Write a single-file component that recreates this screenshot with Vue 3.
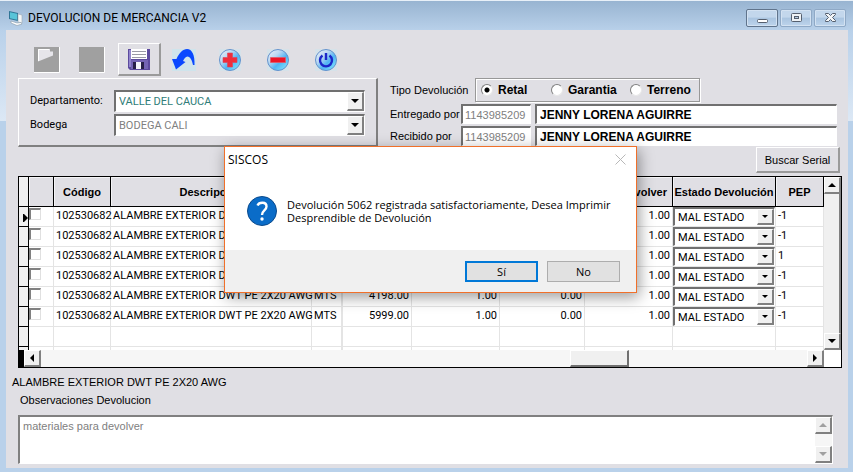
<script setup>
import { ref } from 'vue'

const departamentos = ['VALLE DEL CAUCA']
const bodegas = ['BODEGA CALI']
const tipos = ['Retal', 'Garantia', 'Terreno']
const tipo = ref('Retal')
const personas = [
  { id: 'entregado', label: 'Entregado por', cedula: '1143985209', nombre: 'JENNY LORENA AGUIRRE' },
  { id: 'recibido', label: 'Recibido por', cedula: '1143985209', nombre: 'JENNY LORENA AGUIRRE' }
]
const rows = ref(
  [
    ['1.00', '-1'],
    ['1.00', '-1'],
    ['1.00', '1'],
    ['1.00', '-1'],
    ['4198.00', '-1'],
    ['5999.00', '-1']
  ].map(([serial, pep]) => ({
    sel: false,
    codigo: '102530682',
    desc: 'ALAMBRE EXTERIOR DWT PE 2X20 AWG',
    um: 'MTS',
    serial,
    cantidad: '1.00',
    usado: '0.00',
    devolver: '1.00',
    estado: 'MAL ESTADO',
    pep
  }))
)
const observaciones = ref('materiales para devolver')
const dialogOpen = ref(true)
</script>

<template>
  <div class="window">
    <header class="titlebar">
      <svg class="app-icon" width="16" height="16" viewBox="0 0 16 16" aria-hidden="true">
        <path d="M1 1l9 2v8l-9-2z" fill="#2f7596" />
        <path d="M2 2.300l7 1.500v6L2 8.200z" fill="#58c4d8" />
        <path d="M10 4l4 1v8l-4-1z" fill="#f4f7f8" stroke="#9aa8b3" stroke-width=".6" />
        <path d="M3 11l6 2 4-.5 1 1.500-5 1.500-6-2.500z" fill="#fff" stroke="#8698a6" stroke-width=".6" />
      </svg>
      <h1>DEVOLUCION DE MERCANCIA V2</h1>
      <div class="caption-buttons">
        <button class="first" type="button" aria-label="Minimizar">
          <svg width="13" height="12" viewBox="0 0 13 12"><rect x="1.500" y="7.500" width="10" height="3" rx="1" fill="#fff" stroke="#555f6e" /></svg>
        </button>
        <button type="button" aria-label="Maximizar">
          <svg width="13" height="12" viewBox="0 0 13 12"><rect x="1.500" y="1.500" width="10" height="8" rx="1" fill="#eef2f6" stroke="#555f6e" /><rect x="4.500" y="4.500" width="4" height="2" fill="#b5cbe2" stroke="#555f6e" /></svg>
        </button>
        <button type="button" aria-label="Cerrar">
          <svg width="13" height="12" viewBox="0 0 13 12"><path d="M1.500 1.500h3l2 2 2-2h3v1L8.500 5.500l3 3v1h-3l-2-2-2 2h-3v-1l3-3-3-3z" fill="#f4f6f8" stroke="#555f6e" /></svg>
        </button>
      </div>
    </header>

    <main class="client">
      <div class="toolbar">
        <button type="button" aria-label="Abrir" disabled>
          <svg width="26" height="26" viewBox="0 0 26 26"><path d="M0 0h25v25H0z" fill="#a0a0a0" /><path d="M0 25.500h25.500V0" fill="none" stroke="#fff" /><path d="M4 2h12v2.500h3v4L4 14.500z" fill="#e6e5ea" /><path d="M4.500 14V2.500H15" fill="none" stroke="#fff" /></svg>
        </button>
        <button type="button" aria-label="Nuevo" disabled>
          <svg width="26" height="26" viewBox="0 0 26 26"><path d="M0 0h25v25H0z" fill="#a0a0a0" /><path d="M0 25.500h25.500V0" fill="none" stroke="#fff" /></svg>
        </button>
        <button type="button" class="raised" aria-label="Guardar">
          <svg width="24" height="24" viewBox="0 0 24 24">
            <path d="M1 2h22v21H3l-2-2z" fill="#5c4a9e" /><path d="M2 3h2v17H2z" fill="#9185cc" /><path d="M4 13h17v9H4z" fill="#7464b4" />
            <path d="M4 2h16v10H4z" fill="#fff" /><path d="M5 4.500h14M5 7.500h14M5 10.500h14" stroke="#9a9aa6" />
            <path d="M6 15h3v7H6z" fill="#272048" /><path d="M9 15h8v7H9z" fill="#f4f4fa" /><path d="M14 15h3v7h-3z" fill="#272048" />
          </svg>
        </button>
        <button type="button" aria-label="Deshacer">
          <svg width="24" height="24" viewBox="0 0 24 24"><path fill="#c8e6f0" d="M0 1h24v22H0z" opacity=".7" /><path d="M0 11h4.500C7 5 11 1 15 1c5 0 8 6 7.500 16h-1.500C20 12 18 8.500 15.500 8.500 13.500 8.500 12 11 11 13l2.500 1L4 21.500z" fill="#0a48ff" /></svg>
        </button>
        <button v-for="kind in ['Agregar', 'Quitar', 'Salir']" :key="kind" type="button" :aria-label="kind">
          <svg width="24" height="24" viewBox="0 0 24 24">
            <defs>
              <linearGradient :id="'orb' + kind" x1="0" y1="0" x2="1" y2="1">
                <stop offset="0" stop-color="#f2f2fa" /><stop offset=".35" stop-color="#b9d8f2" /><stop offset=".6" stop-color="#50b4f4" /><stop offset="1" stop-color="#8cf0ff" />
              </linearGradient>
            </defs>
            <path d="M1 1h22v22H1z" fill="#c8e6f0" opacity=".4" />
            <circle cx="12" cy="12" r="10.500" :fill="`url(#orb${kind})`" stroke="#6592cc" />
            <path v-if="kind === 'Agregar'" d="M9.500 5h5v4.500H19v5h-4.500V19h-5v-4.500H5v-5h4.500z" fill="#f12d3c" stroke="#d9485a" stroke-width=".6" />
            <path v-else-if="kind === 'Quitar'" d="M4.500 9.500h15v5h-15z" fill="#ee1527" stroke="#e05a68" stroke-width=".8" />
            <path v-else d="M8.500 7.500a6 6 0 1 0 7 0M12 5v7" fill="none" stroke="#1c28c8" stroke-width="2.400" />
          </svg>
        </button>
      </div>

      <div class="top">
        <section class="location">
          <label for="depto">Departamento:</label>
          <span class="combo teal">
            <select id="depto"><option v-for="d in departamentos" :key="d">{{ d }}</option></select>
            <i class="drop"><svg width="8" height="4" viewBox="0 0 8 4"><path d="M0 0h8L4 4z" /></svg></i>
          </span>
          <label for="bodega">Bodega</label>
          <span class="combo">
            <select id="bodega"><option v-for="b in bodegas" :key="b">{{ b }}</option></select>
            <i class="drop"><svg width="8" height="4" viewBox="0 0 8 4"><path d="M0 0h8L4 4z" /></svg></i>
          </span>
        </section>

        <section class="people">
          <div class="kind">
            <span>Tipo Devolución</span>
            <div class="radios" role="radiogroup" aria-label="Tipo Devolución">
              <label v-for="t in tipos" :key="t"><input v-model="tipo" type="radio" name="tipo" :value="t" />{{ t }}</label>
            </div>
          </div>
          <div v-for="p in personas" :key="p.id" class="person">
            <label :for="p.id">{{ p.label }}</label>
            <input :id="p.id" class="code" :value="p.cedula" readonly />
            <input class="name" :value="p.nombre" :aria-label="p.label + ' nombre'" readonly />
          </div>
        </section>
      </div>

      <div class="search"><button type="button" class="raised">Buscar Serial</button></div>

      <div class="grid">
        <div class="grid-body">
          <div class="table-clip">
            <table>
              <colgroup>
                <col class="w-mark" /><col class="w-check" /><col class="w-code" /><col /><col class="w-um" />
                <col class="w-serial" /><col class="w-num" /><col class="w-used" /><col class="w-num" /><col class="w-state" /><col class="w-pep" />
              </colgroup>
              <thead>
                <tr>
                  <th class="mark"></th><th></th><th>Código</th><th>Descripción</th><th>UM</th><th>Serial</th>
                  <th>Cantidad</th><th>Usado</th><th>Cant. Devolver</th><th>Estado Devolución</th><th>PEP</th>
                </tr>
              </thead>
              <tbody>
                <tr v-for="(r, i) in rows" :key="i">
                  <td class="mark"><svg v-if="i === 0" width="5" height="8" viewBox="0 0 5 8"><path d="M0 0h1l4 4-4 4H0z" /></svg></td>
                  <td class="check"><input v-model="r.sel" type="checkbox" :aria-label="'Fila ' + (i + 1)" /></td>
                  <td>{{ r.codigo }}</td>
                  <td>{{ r.desc }}</td>
                  <td class="um">{{ r.um }}</td>
                  <td class="num">{{ r.serial }}</td>
                  <td class="num">{{ r.cantidad }}</td>
                  <td class="num">{{ r.usado }}</td>
                  <td class="num">{{ r.devolver }}</td>
                  <td class="state">
                    <span class="combo small">
                      <select v-model="r.estado" :aria-label="'Estado ' + (i + 1)"><option>MAL ESTADO</option></select>
                      <i class="drop"><svg width="6" height="3" viewBox="0 0 6 3"><path d="M0 0h6L3 3z" /></svg></i>
                    </span>
                  </td>
                  <td>{{ r.pep }}</td>
                </tr>
                <tr v-for="n in 2" :key="'empty' + n">
                  <td class="mark"></td><td></td><td></td><td></td><td class="um"></td><td></td><td></td><td></td><td></td><td></td><td></td>
                </tr>
              </tbody>
            </table>
          </div>
          <div class="vscroll">
            <i class="arrow"><svg width="8" height="4" viewBox="0 0 8 4"><path d="M4 0l4 4H0z" /></svg></i>
            <i class="thumb"></i>
            <i class="arrow"><svg width="8" height="4" viewBox="0 0 8 4"><path d="M0 0h8L4 4z" /></svg></i>
          </div>
        </div>
        <div class="hscroll">
          <i class="arrow"><svg width="4" height="8" viewBox="0 0 4 8"><path d="M4 0v8L0 4z" /></svg></i>
          <div class="track"><i class="thumb"></i></div>
          <i class="arrow"><svg width="4" height="8" viewBox="0 0 4 8"><path d="M0 0l4 4-4 4z" /></svg></i>
          <i class="corner"></i>
        </div>
      </div>

      <p class="current">ALAMBRE EXTERIOR DWT PE 2X20 AWG</p>
      <label class="notes-label" for="obs">Observaciones Devolucion</label>
      <div class="notes">
        <textarea id="obs" v-model="observaciones"></textarea>
        <div class="vscroll off">
          <i class="arrow"><svg width="8" height="4" viewBox="0 0 8 4"><path d="M4 0l4 4H0z" /></svg></i>
          <i class="arrow"><svg width="8" height="4" viewBox="0 0 8 4"><path d="M0 0h8L4 4z" /></svg></i>
        </div>
      </div>
    </main>

    <div v-if="dialogOpen" class="dialog" role="dialog" aria-labelledby="dlg-title">
      <div class="dialog-head">
        <h2 id="dlg-title">SISCOS</h2>
        <button type="button" class="close" aria-label="Cerrar diálogo" @click="dialogOpen = false">
          <svg width="11" height="11" viewBox="0 0 11 11"><path d="M.5.500l10 10M10.500.500l-10 10" stroke="#b8b8b8" fill="none" /></svg>
        </button>
      </div>
      <div class="dialog-body">
        <svg width="30" height="30" viewBox="0 0 30 30" aria-hidden="true">
          <circle cx="15" cy="15" r="14.500" fill="#0a6cc8" stroke="#0b4a8c" />
          <path d="M10.500 9.500C12 6 19.500 5.500 19.500 10.500c0 4-4.500 4-4.500 8.500" fill="none" stroke="#fff" stroke-width="2.400" />
          <circle cx="15" cy="23" r="1.700" fill="#fff" />
        </svg>
        <p>Devolución 5062 registrada satisfactoriamente, Desea Imprimir<br />Desprendible de Devolución</p>
      </div>
      <div class="dialog-foot">
        <button type="button" class="default" @click="dialogOpen = false">Sí</button>
        <button type="button" @click="dialogOpen = false">No</button>
      </div>
    </div>
  </div>
</template>

<style>
body {
  margin: 0;
}
</style>

<style scoped>
* {
  box-sizing: border-box;
}
.window {
  position: relative;
  display: flex;
  flex-direction: column;
  min-height: 100vh;
  padding: 0 5px 5px 6px;
  border-top: 1px solid #e8f0f8;
  background: linear-gradient(#98b4d1 0, #b9d1ea 30px, #dce8f5 120px, #b9d1ea 120px);
  font: 11px/14px "Liberation Sans", Arial, sans-serif;
  color: #000;
}
button,
input,
select,
textarea {
  margin: 0;
  padding: 0;
  border: 0;
  border-radius: 0;
  background: none;
  font: inherit;
  color: inherit;
}
svg {
  display: block;
}
h1,
h2,
p {
  margin: 0;
  font-weight: normal;
}
.titlebar {
  display: flex;
  align-items: center;
  height: 29px;
  padding: 5px 2px 0 2px;
}
h1 {
  flex: 1;
  margin-left: 4px;
  font: 12px/16px Roboto, sans-serif;
}
.caption-buttons {
  display: flex;
  gap: 2px;
}
.caption-buttons button {
  display: flex;
  align-items: center;
  justify-content: center;
  width: 32px;
  height: 18px;
  border: 1px solid #8fa9c6;
  border-radius: 2px;
  background: linear-gradient(#c3d7ec 45%, #a9c4e0 50%, #bdd4ec);
  box-shadow: inset 0 0 0 1px #d3e2f2;
}
.caption-buttons .first {
  border-color: #60748c;
}
.client {
  flex: 1;
  padding: 13px 6px 4px 12px;
  background: #e0dfe4;
}
.toolbar {
  display: grid;
  grid-template-columns: 45px 39px 54px 46px 48px 48px 48px;
  align-items: center;
  height: 33px;
  padding-left: 16px;
}
.toolbar button {
  justify-self: start;
}
.toolbar .raised {
  width: 43px;
  height: 33px;
  padding-left: 8px;
}
.raised {
  border: solid;
  border-width: 1px 2px 2px 1px;
  border-color: #fff #9a9a9a #9a9a9a #fff;
}
.top {
  display: grid;
  grid-template-columns: 360px 1fr;
  margin-top: 2px;
}
.location {
  display: grid;
  grid-template-columns: 84px 1fr;
  row-gap: 2px;
  align-items: center;
  align-content: start;
  height: 69px;
  padding: 11px 11px 0 11px;
  border: solid;
  border-width: 1px 2px 2px 1px;
  border-color: #fff #808080 #808080 #fff;
  font-family: Roboto, sans-serif;
}
.combo {
  display: flex;
  height: 22px;
  border: solid;
  border-width: 2px 1px 1px 2px;
  border-color: #707070 #fff #fff #707070;
  background: #fff;
  color: #808080;
}
.combo select {
  flex: 1;
  min-width: 0;
  padding-left: 3px;
  appearance: none;
}
.combo.teal {
  color: #2f7d78;
}
.drop,
.arrow {
  display: flex;
  flex: none;
  align-items: center;
  justify-content: center;
  width: 17px;
  border: solid;
  border-width: 1px 2px 2px 1px;
  border-color: #fff #808080 #808080 #fff;
  background: #f0f0f0;
}
.people {
  padding: 0 5px 0 12px;
}
.kind {
  display: flex;
  align-items: center;
}
.kind > span {
  width: 85px;
}
.radios {
  display: grid;
  grid-template-columns: 70px 79px auto;
  align-items: center;
  width: 225px;
  height: 24px;
  padding: 0 5px;
  border: 1px solid #989898;
  box-shadow: inset 1px 1px #fff, 1px 1px #fff;
}
.radios label {
  display: flex;
  gap: 5px;
  align-items: center;
  font-size: 12px;
  font-weight: bold;
}
.radios input {
  width: 12px;
  height: 12px;
  appearance: none;
  border: 1px solid;
  border-color: #808080 #e8e8e8 #e8e8e8 #808080;
  border-radius: 50%;
  background: #fff;
}
.radios input:checked {
  background: radial-gradient(#000 2px, #fff 3px);
}
.person {
  display: grid;
  grid-template-columns: 71px 70px 1fr;
  align-items: center;
  margin-top: 2px;
}
.person input {
  height: 20px;
  border: solid;
  border-width: 2px 1px 1px 2px;
  border-color: #707070 #fff #fff #707070;
  background: #fff;
}
.person .code {
  width: 100%;
  padding-left: 2px;
  color: #808080;
}
.person .name {
  min-width: 0;
  margin-left: 4px;
  padding-left: 3px;
  font-size: 12px;
  font-weight: bold;
}
.search {
  display: flex;
  justify-content: flex-end;
  padding: 0 2px 3px 0;
}
.search button {
  width: 84px;
  height: 26px;
}
.grid {
  border: 1px solid #000;
}
.grid-body {
  display: flex;
  height: 173px;
}
.table-clip {
  flex: 1;
  overflow: hidden;
  background: #fff;
}
table {
  width: 100%;
  table-layout: fixed;
  border-collapse: separate;
  border-spacing: 0;
}
.w-mark { width: 10px; }
.w-check { width: 25px; }
.w-code { width: 57px; }
.w-um { width: 31px; }
.w-serial { width: 69px; }
.w-num { width: 88px; }
.w-used { width: 85px; }
.w-state { width: 103px; }
.w-pep { width: 48px; }
th {
  height: 30px;
  padding: 0;
  border: solid #000;
  border-width: 0 1px 1px 0;
  background: #e0dfe4;
  box-shadow: inset 1px 1px #f4f4f6;
  white-space: nowrap;
}
td {
  height: 20px;
  padding: 0 2px;
  border: solid #e4e4e4;
  border-width: 0 1px 1px 0;
  font-family: Roboto, sans-serif;
  line-height: 18px;
  vertical-align: top;
  white-space: nowrap;
}
.um {
  border-right-width: 2px;
}
.mark {
  padding: 0;
  border-color: #000;
  background: #f0f0f0;
}
td.mark svg {
  margin: 7px 0 0 4px;
}
.num {
  text-align: right;
}
.check,
.state {
  padding: 0;
}
.check input {
  display: block;
  width: 12px;
  height: 12px;
  margin-top: 1px;
  appearance: none;
  border: solid;
  border-width: 2px 1px 1px 2px;
  border-color: #808080 #e0e0e0 #e0e0e0 #808080;
  background: #fff;
}
.small {
  height: 19px;
  color: #000;
}
.vscroll {
  display: flex;
  flex-direction: column;
  flex: none;
  width: 17px;
  background: #f6f6f6;
}
.arrow {
  height: 17px;
}
.vscroll .thumb {
  flex: 1;
  border-right: 2px solid #808080;
  background: #f0f0f0;
}
.hscroll {
  display: flex;
  height: 17px;
  padding-left: 5px;
  background: #000;
}
.track {
  display: flex;
  flex: 1;
  background: #f6f6f6;
}
.track .thumb {
  width: 59px;
  margin-left: 69%;
  border: solid;
  border-width: 1px 2px 2px 1px;
  border-color: #fff #707070 #707070 #fff;
  background: #f0f0f0;
}
.corner {
  width: 17px;
  background: #fff;
}
.current {
  margin: 7px 0 0 -6px;
}
.notes-label {
  display: block;
  margin: 4px 0 0 2px;
}
.notes {
  display: flex;
  height: 49px;
  margin: 8px 9px 0 0;
  border: solid;
  border-width: 2px 1px 1px 2px;
  border-color: #808080 #fff #fff #808080;
  background: #fff;
  color: #808080;
}
.notes textarea {
  flex: 1;
  padding: 2px 3px;
  resize: none;
}
.off {
  justify-content: space-between;
}
.off svg {
  fill: #a0a0a0;
}
.dialog {
  position: absolute;
  top: 145px;
  left: 224px;
  width: 413px;
  border: 1px solid #f0702a;
  background: #fff;
  box-shadow: 2px 4px 14px rgba(0, 0, 0, 0.4);
  font: 11px/13px "Open Sans", "Noto Sans", sans-serif;
}
.dialog-head {
  display: flex;
  align-items: center;
  justify-content: space-between;
  height: 25px;
  padding: 0 10px 0 3px;
}
.dialog h2 {
  font: 12px/14px "Open Sans", "Noto Sans", sans-serif;
}
.dialog-body {
  display: flex;
  gap: 10px;
  height: 78px;
  padding: 24px 0 0 22px;
}
.dialog-body p {
  padding-top: 2px;
}
.dialog-foot {
  display: flex;
  justify-content: flex-end;
  gap: 9px;
  padding: 11px 16px 10px;
  background: #f0f0f0;
}
.dialog-foot button {
  width: 73px;
  height: 21px;
  border: 1px solid #adadad;
  background: #e1e1e1;
}
.dialog-foot .default {
  border: 2px solid #0078d7;
}
</style>
